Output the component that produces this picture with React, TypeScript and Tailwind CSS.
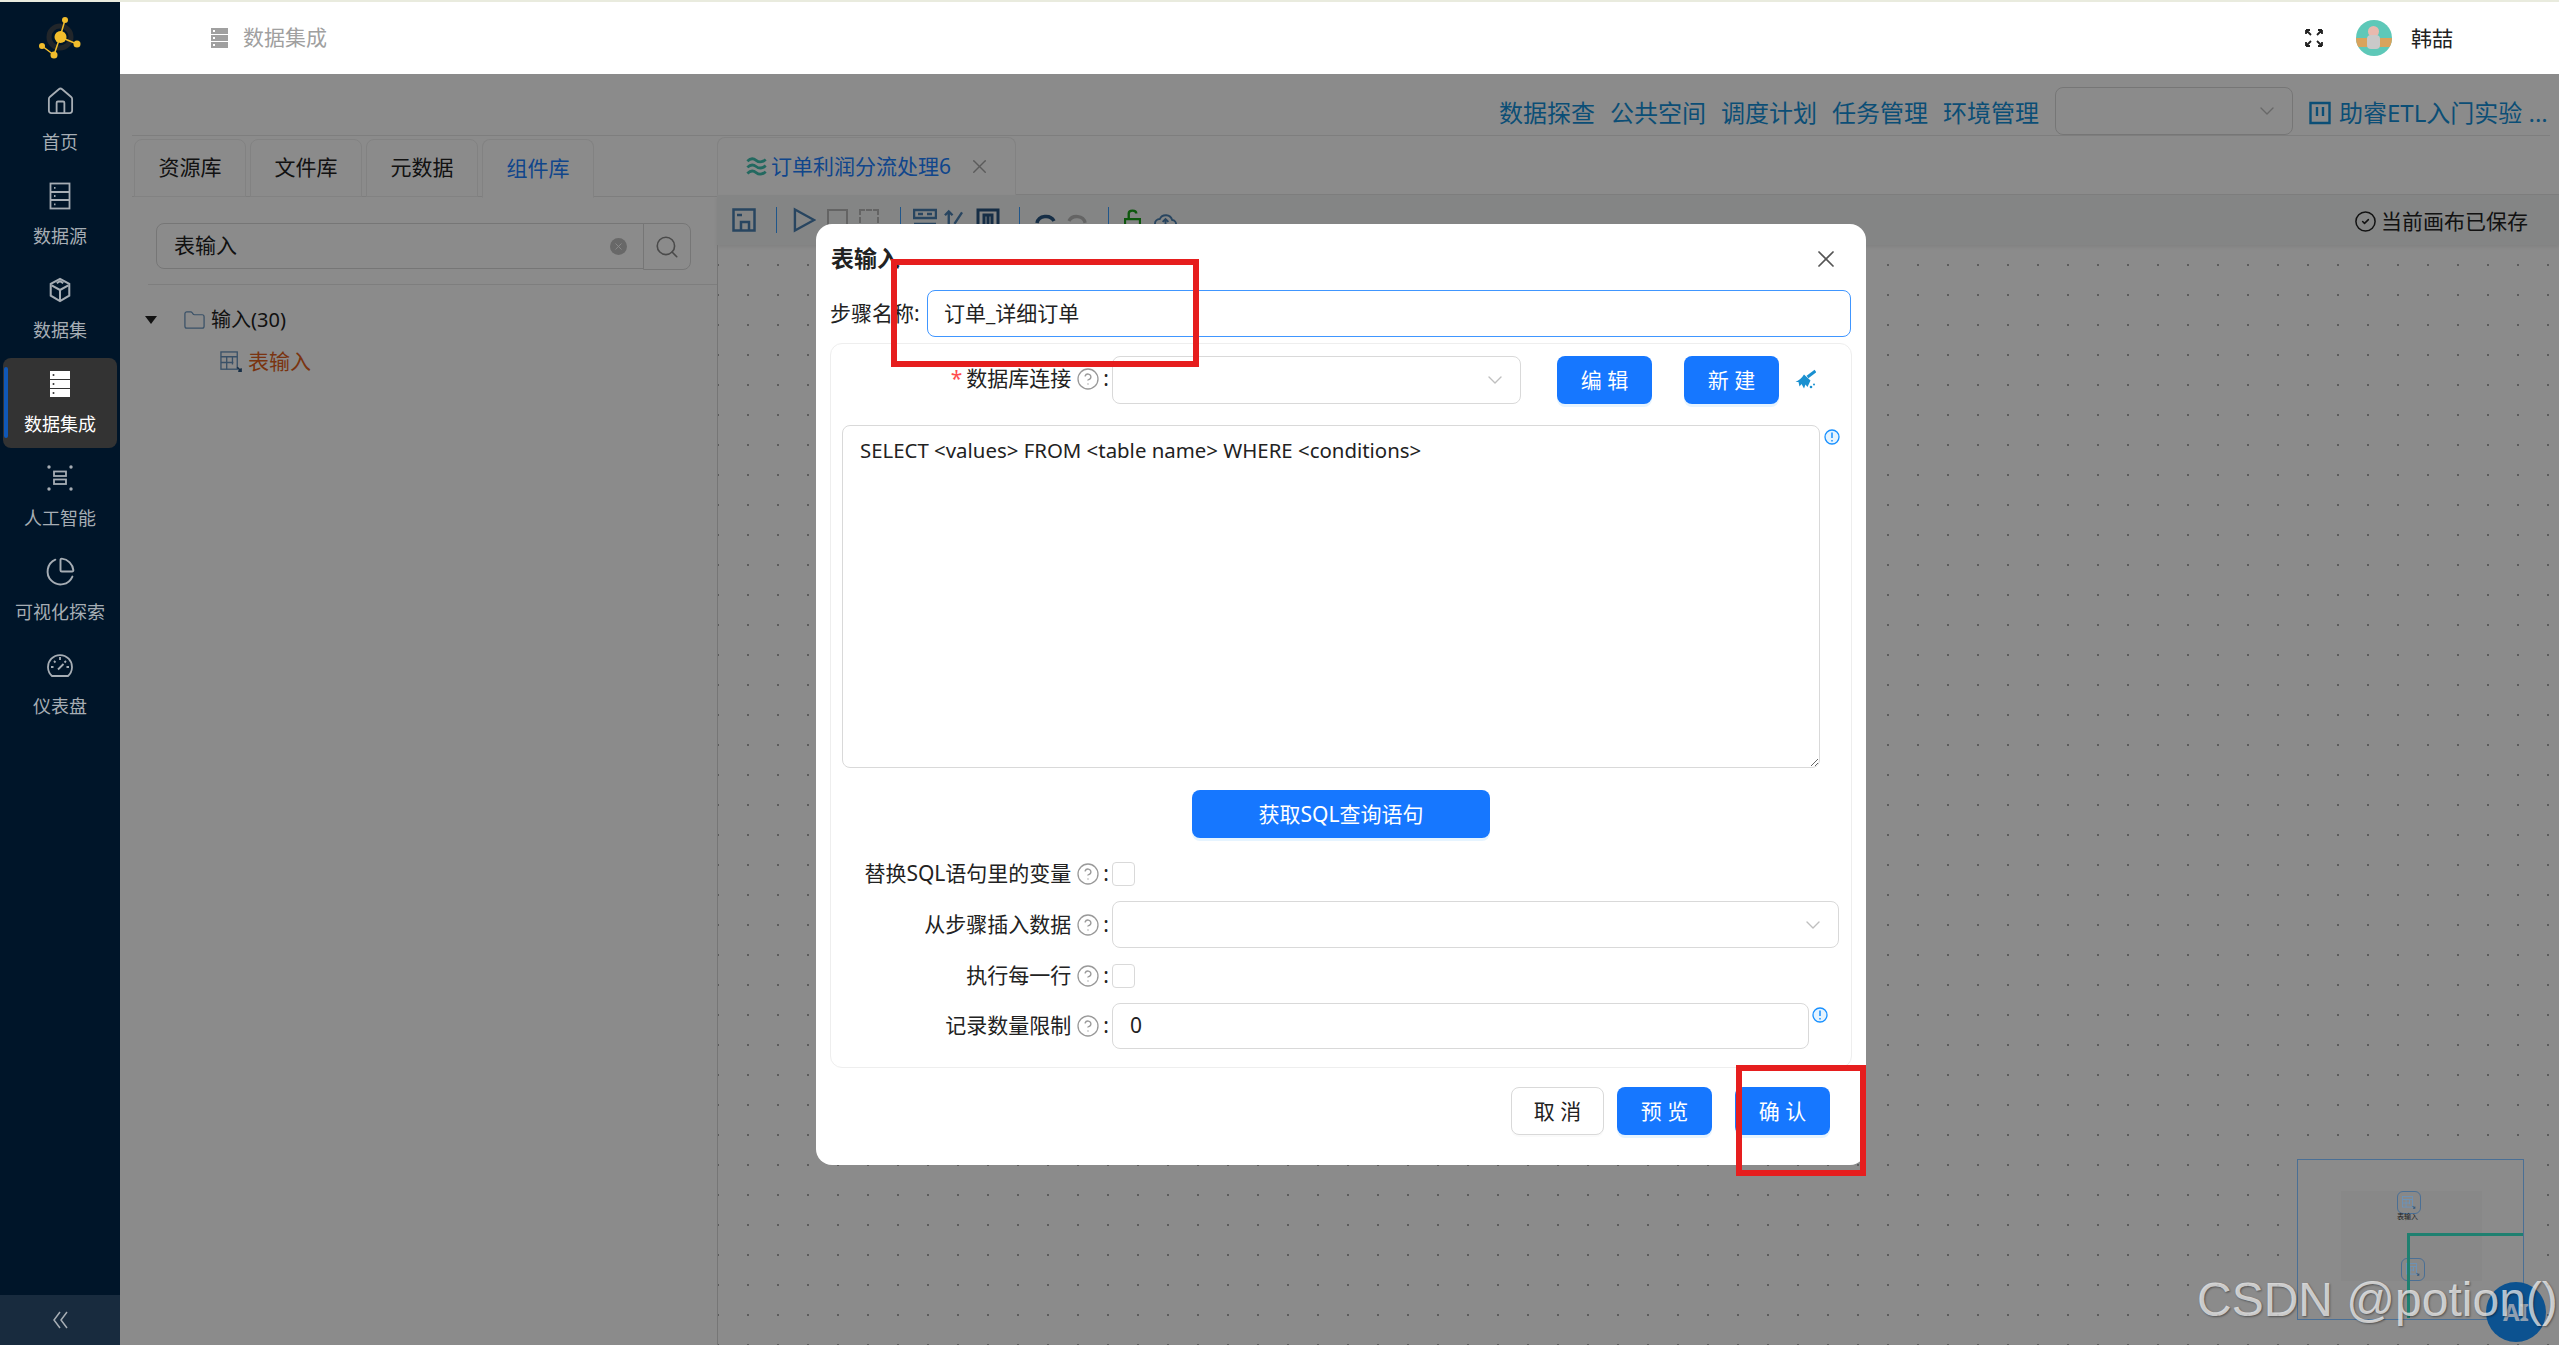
import { ChartPie, ChevronDown, CircleCheck, CircleHelp, Folder, House, Search, X } from "lucide-react";

function StackIcon({ solid = false }: { solid?: boolean }) {
  if (!solid) {
    return (
      <svg viewBox="0 0 24 28" className="h-[28px] w-[24px]" fill="none" stroke="#a6adb4" strokeWidth="1.8">
        <rect x="2.500" y="1.500" width="19" height="25" />
        <path d="M2.500 10h19M2.500 18h19" />
        <path d="M6 5.800h1.500M6 14h1.500M6 22.300h1.500" />
      </svg>
    );
  }
  return (
    <svg viewBox="0 0 24 28" className="h-[28px] w-[24px]">
      {[1, 10, 19].map((y) => (
        <g key={y}>
          <rect x="2" y={y} width="20" height="8" fill="#fff" />
          <circle cx="5.500" cy={y + 4} r="1" fill="#333" />
        </g>
      ))}
    </svg>
  );
}

function CubeIcon() {
  return (
    <svg viewBox="0 0 24 28" className="h-[26px] w-[24px]" fill="none" stroke="#a6adb4" strokeWidth="2.200">
      <path d="M12 2 22 7.500V20L12 26 2 20V7.500Z" />
      <path d="M3 9l9 5 9-5M12 14v11M8.500 6.500 12 4.500l3.500 2" />
    </svg>
  );
}

function AiIcon() {
  return (
    <svg viewBox="0 0 26 26" className="h-[26px] w-[26px]" fill="none" stroke="#a6adb4" strokeWidth="1.800">
      <rect x="7" y="6.500" width="12" height="4.500" />
      <rect x="7" y="14.500" width="12" height="4.500" />
      {[
        [2, 2],
        [24, 2],
        [2, 24],
        [24, 24],
      ].map(([x, y]) => (
        <circle key={`${x}-${y}`} cx={x} cy={y} r="1.700" fill="#a6adb4" stroke="none" />
      ))}
    </svg>
  );
}

function GaugeIcon() {
  return (
    <svg viewBox="0 0 26 26" className="h-[26px] w-[26px]" fill="none" stroke="#a6adb4" strokeWidth="1.800">
      <path d="M5 23A12 12 0 1 1 21 23Z" />
      <path d="M13 4v3M4 14h2.500M19.500 14h2.500M7 8l1.500 1.500M19 8l-1.500 1.500M11 16.500 16.500 11" />
    </svg>
  );
}

function Logo() {
  return (
    <svg viewBox="0 0 60 60" className="h-[60px] w-[60px]" fill="none">
      <circle cx="30" cy="29" r="11" stroke="#22262a" strokeWidth="5" />
      <g stroke="#f2bd2c" strokeWidth="1.500">
        <path d="M30 29 35 12M30 29 47 36M30 29 24 47M24 47 12 38" />
      </g>
      <g fill="#f2bd2c">
        <circle cx="30.500" cy="29" r="6" />
        <circle cx="35" cy="12" r="3" />
        <circle cx="47" cy="36" r="3.500" />
        <circle cx="24" cy="47" r="3.500" />
        <circle cx="12" cy="38" r="3" />
      </g>
    </svg>
  );
}

function TableInputIcon({ className }: { className: string }) {
  return (
    <svg viewBox="0 0 24 24" className={className} fill="none" stroke="#6a94bd" strokeWidth="1.400">
      <rect x="1" y="1" width="17" height="18" />
      <path d="M1 6h17M1 12h13M7 6v13M13 6v8" />
      <path d="M18 17l4 4M22 18v3h-3" stroke="#2a5580" strokeWidth="1.600" />
    </svg>
  );
}

function BroomIcon() {
  return (
    <svg viewBox="0 0 21 21" className="h-[21px] w-[21px] flex-none" fill="#1a90d0">
      <path d="M20.500 2 12.500 8" stroke="#1a90d0" strokeWidth="3" />
      <path d="M9 5.500 15.500 11.500 12.500 18 10.500 15.500 9 19.500 6.500 15 4.500 17.500 3.500 13 .5 13Q6 10.500 9 5.500Z" />
      <circle cx="16" cy="18" r="1.300" />
      <circle cx="19" cy="15.500" r="1" />
    </svg>
  );
}

const NAV_ITEMS = [
  { label: "首页", icon: <House className="h-[31px] w-[31px] text-[#a6adb4]" strokeWidth={1.4} /> },
  { label: "数据源", icon: <StackIcon /> },
  { label: "数据集", icon: <CubeIcon /> },
  { label: "数据集成", icon: <StackIcon solid />, active: true },
  { label: "人工智能", icon: <AiIcon /> },
  { label: "可视化探索", icon: <ChartPie className="h-[31px] w-[31px] text-[#a6adb4]" strokeWidth={1.5} /> },
  { label: "仪表盘", icon: <GaugeIcon /> },
];

function Sidebar() {
  return (
    <aside className="flex w-[120px] flex-none flex-col bg-[#001529]">
      <div className="flex h-[72px] items-center justify-center">
        <Logo />
      </div>
      <nav className="flex flex-1 flex-col gap-1 px-[3px] pt-[2px]">
        {NAV_ITEMS.map((item) => (
          <div
            key={item.label}
            className={
              item.active
                ? "relative flex h-[90px] flex-col items-center justify-center gap-[14px] rounded-lg bg-[#333333] pb-[1px] text-[18px] text-white"
                : "relative flex h-[90px] flex-col items-center justify-center gap-[14px] rounded-lg pb-[1px] text-[18px] text-[#a6adb4]"
            }
          >
            {item.active && (
              <span className="absolute top-[9px] bottom-[10px] left-[1px] w-[4px] rounded bg-[#1058b8]" />
            )}
            <span className="flex h-[28px] items-center">{item.icon}</span>
            <span className="whitespace-nowrap leading-[24px]">{item.label}</span>
          </div>
        ))}
      </nav>
      <div className="flex h-[50px] items-center justify-center bg-[#182b3e]">
        <svg viewBox="0 0 16 18" className="h-[18px] w-[16px]" fill="none" stroke="#a6adb4" strokeWidth="1.500">
          <path d="M8 1 2 9l6 8M15 1 9 9l6 8" />
        </svg>
      </div>
    </aside>
  );
}

function Header() {
  return (
    <header className="flex h-[72px] flex-none items-center bg-white pl-[91px] pr-[106px]">
      <div className="flex w-[17px] flex-col gap-[1px]">
        {[0, 1, 2].map((row) => (
          <span key={row} className="flex h-[6px] items-center bg-[#a0a0a0] pl-[2px]">
            <span className="h-[2px] w-[2px] bg-white" />
          </span>
        ))}
      </div>
      <span className="ml-[15px] text-[21px] text-[#a0a0a0]">数据集成</span>
      <div className="ml-auto flex items-center">
        <svg viewBox="0 0 20 20" className="h-[20px] w-[20px]" fill="none" stroke="#222" strokeWidth="1.800">
          <path d="M2 2l5 5M2 2v4M2 2h4M18 2l-5 5M18 2v4M18 2h-4M2 18l5-5M2 18v-4M2 18h4M18 18l-5-5M18 18v-4M18 18h-4" />
        </svg>
        <div className="relative ml-[32px] h-[36px] w-[36px] overflow-hidden rounded-full bg-[#5ec8b8]">
          <span className="absolute top-[18px] left-0 h-[9px] w-full bg-[#d9a35c]" />
          <span className="absolute top-[6px] left-[12px] h-[11px] w-[11px] rounded-full bg-[#e8b9ae]" />
          <span className="absolute top-[15px] left-[11px] h-[14px] w-[13px] rounded bg-[#c9c9c9]" />
        </div>
        <span className="ml-[19px] pt-[2px] text-[21px] text-[#222]">韩喆</span>
      </div>
    </header>
  );
}

function TopLinks() {
  return (
    <div className="ml-3 mr-[9px] flex h-[62px] flex-none items-center justify-end border-b border-[#e8e8e8] pt-[13px] text-[24px] text-[#1590d8]">
      <div className="flex gap-[15px] pt-[3px]">
        <span>数据探查</span>
        <span>公共空间</span>
        <span>调度计划</span>
        <span>任务管理</span>
        <span>环境管理</span>
      </div>
      <div className="ml-[16px] flex h-[48px] w-[238px] items-center justify-end rounded-lg border border-[#d9d9d9] pr-[13px] text-[#bfbfbf]">
        <ChevronDown className="h-[24px] w-[24px]" strokeWidth={1.4} />
      </div>
      <div className="ml-[16px] flex w-[241px] items-center gap-[8px] whitespace-nowrap pt-[3px]">
        <svg viewBox="0 0 22 24" className="h-[24px] w-[22px] flex-none" fill="none" stroke="#1590d8" strokeWidth="2.400">
          <path d="M1.500 2h19v20h-19zM8 6v9M14 6v9" />
        </svg>
        <span>助睿ETL入门实验 ...</span>
      </div>
    </div>
  );
}

const LEFT_TABS = ["资源库", "文件库", "元数据", "组件库"];

function LeftPanel() {
  return (
    <div className="ml-3 flex w-[585px] flex-none flex-col">
      <div className="flex h-[61px] gap-1 border-b border-[#e8e8e8] pt-[3px] pl-[2px]">
        {LEFT_TABS.map((tab) => (
          <div
            key={tab}
            className={
              tab === "组件库"
                ? "-mb-px flex h-[59px] w-[112px] items-center justify-center rounded-t-lg border border-[#eeeeee] border-b-white bg-white text-[21px] text-[#2080ff]"
                : "flex h-[58px] w-[112px] items-center justify-center rounded-t-lg border border-[#eeeeee] bg-white text-[21px] text-[#222]"
            }
          >
            {tab}
          </div>
        ))}
      </div>
      <div className="ml-[16px] flex h-[88px] border-b border-[#e8e8e8] pt-[26px] pl-[8px]">
        <div className="flex h-[46px] w-[488px] items-center justify-between rounded-l-lg border border-[#d9d9d9] pl-[17px] pr-[16px] text-[21px] text-[#222]">
          <span>表输入</span>
          <span className="flex h-[17px] w-[17px] items-center justify-center rounded-full bg-[#bfbfbf]">
            <X className="h-[11px] w-[11px] text-white" strokeWidth={2} />
          </span>
        </div>
        <div className="-ml-px flex h-[47px] w-[48px] items-center justify-center rounded-r-lg border border-[#d9d9d9]">
          <Search className="h-[26px] w-[26px] text-[#888]" strokeWidth={1.5} />
        </div>
      </div>
      <div className="mt-[20px] flex h-[30px] items-center text-[20px] text-[#222]">
        <span className="ml-[13px] h-0 w-0 border-x-[6px] border-t-[8px] border-x-transparent border-t-[#222]" />
        <Folder className="ml-[26px] h-[23px] w-[23px] text-[#6a94bd]" strokeWidth={1.3} />
        <span className="ml-[5px]">输入(30)</span>
      </div>
      <div className="mt-[15px] flex h-[24px] items-center pl-[88px] text-[21px] text-[#e06020]">
        <TableInputIcon className="h-[23px] w-[23px]" />
        <span className="ml-[5px]">表输入</span>
      </div>
    </div>
  );
}

function Toolbar() {
  const Sep = ({ ml }: { ml: string }) => <span className={`h-[26px] w-px bg-[#3a9fff] ${ml}`} />;
  return (
    <div className="flex h-[50px] flex-none items-center bg-[#f2f5f5] pl-[15px] pr-[31px] shadow-[0_2px_4px_rgba(0,0,0,0.08)]">
      <svg viewBox="0 0 24 24" className="h-[24px] w-[24px]" fill="none" stroke="#4a7fb0" strokeWidth="2.500">
        <rect x="1.500" y="1.500" width="21" height="21" />
        <path d="M5 7h5M9 23v-9h8v9" />
      </svg>
      <Sep ml="ml-[20px]" />
      <svg viewBox="0 0 24 26" className="ml-[16px] h-[26px] w-[23px]" fill="none" stroke="#4a7fb0" strokeWidth="2.500">
        <path d="M2 2 22 13 2 24Z" />
      </svg>
      <span className="ml-[11px] h-[22px] w-[21px] border-2 border-[#b8b8b8]" />
      <span className="ml-[11px] h-[22px] w-[20px] border-2 border-dashed border-[#b8b8b8]" />
      <Sep ml="ml-[21px]" />
      <svg viewBox="0 0 24 24" className="ml-[12px] h-[24px] w-[24px]" fill="none" stroke="#4a7fb0" strokeWidth="2.500">
        <path d="M1 2h22v8H1zM5 6h5M14 6h5M1 16h22" />
      </svg>
      <svg viewBox="0 0 20 24" className="ml-[7px] h-[24px] w-[19px]" fill="none" stroke="#4a7fb0" strokeWidth="2.500">
        <path d="M5 24V3M1 7l4-4 4 4M11 16 19 4" />
      </svg>
      <svg viewBox="0 0 24 24" className="ml-[13px] h-[24px] w-[24px]" fill="none" stroke="#2a5580" strokeWidth="3">
        <path d="M2 2h20v20H2zM8 18V7h8v11M12 7v11" />
      </svg>
      <Sep ml="ml-[19px]" />
      <svg viewBox="0 0 22 22" className="ml-[14px] h-[22px] w-[22px]" fill="none" stroke="#2a5580" strokeWidth="3.500">
        <path d="M3 14A9 8 0 0 1 20 12" />
      </svg>
      <svg viewBox="0 0 22 22" className="ml-[11px] h-[22px] w-[21px]" fill="none" stroke="#b8b8b8" strokeWidth="3.500">
        <path d="M2 12A9 8 0 0 1 19 14" />
      </svg>
      <Sep ml="ml-[20px]" />
      <svg viewBox="0 0 18 22" className="ml-[15px] h-[22px] w-[17px]" fill="none" stroke="#18a018" strokeWidth="2.500">
        <path d="M5 9V4q0-3 4-3t4 3M1 10h16v11H1z" />
      </svg>
      <svg viewBox="0 0 24 22" className="ml-[13px] h-[22px] w-[23px]" fill="none" stroke="#4a7fb0" strokeWidth="2">
        <path d="M6 20a5 5 0 0 1 0-10 7 7 0 0 1 13 1 4.500 4.500 0 0 1-1 9zM12 17v-6M9 13l3-3 3 3" />
      </svg>
      <div className="ml-auto flex items-center gap-[4px] pt-[3px] text-[21px] text-[#222]">
        <CircleCheck className="h-[23px] w-[23px]" strokeWidth={1.6} />
        当前画布已保存
      </div>
    </div>
  );
}

function RightPanel() {
  return (
    <div className="flex flex-1 flex-col">
      <div className="flex h-[59px] flex-none border-b border-[#e8e8e8] pt-px">
        <div className="-mb-px flex w-[299px] items-center rounded-t-lg border border-[#eeeeee] border-b-white bg-white pl-[26px]">
          <svg viewBox="0 0 26 24" className="h-[21px] w-[26px] flex-none" fill="none" stroke="#40c0b0" strokeWidth="3.200">
            <path d="M2 6q5-5 10-1t11-1M2 13q5-5 10-1t11-1M2 20q5-5 10-1t11-1" />
          </svg>
          <span className="ml-[1px] whitespace-nowrap pt-[2px] text-[21px] text-[#2080ff]">订单利润分流处理6</span>
          <X className="ml-[17px] h-[23px] w-[23px] text-[#a8a8a8]" strokeWidth={1.5} />
        </div>
      </div>
      <Toolbar />
      <div className="flex-1 border-l border-[#d9d9d9] bg-[radial-gradient(circle,#aaaaaa_1px,transparent_1.2px)] bg-[length:30px_30px] bg-[position:-15px_5px]" />
    </div>
  );
}

function HelpLabel({ text, required }: { text: string; required?: boolean }) {
  return (
    <div
      className={
        required
          ? "flex w-[281px] flex-none items-center justify-end pr-[3px] pb-[3px] text-[21px] text-[#222]"
          : "flex w-[281px] flex-none items-center justify-end pr-[3px] text-[21px] text-[#222]"
      }
    >
      {required && <span className="mr-[4px] text-[#ff4d4f]">*</span>}
      <span className="whitespace-nowrap">{text}</span>
      <CircleHelp className="ml-[5px] mr-[3px] h-[24px] w-[24px] text-[#999]" strokeWidth={1.3} />
      <span>:</span>
    </div>
  );
}

function SelectBox({ className }: { className: string }) {
  return (
    <div className={`flex items-center justify-end rounded-lg border border-[#d9d9d9] pr-[13px] ${className}`}>
      <ChevronDown className="h-[24px] w-[24px] text-[#bfbfbf]" strokeWidth={1.4} />
    </div>
  );
}

function Checkbox() {
  return <span className="h-[24px] w-[23px] rounded border border-[#d9d9d9] bg-white" />;
}

function InfoIcon() {
  return (
    <svg viewBox="0 0 18 18" className="h-[18px] w-[18px]" fill="#e6f4ff" stroke="#1890ff" strokeWidth="1.300">
      <circle cx="9" cy="9" r="7" />
      <path d="M9 4.500v5.500M9 12v1.500" strokeWidth="1.500" />
    </svg>
  );
}

function PrimaryButton({ label, className }: { label: string; className: string }) {
  return (
    <button
      className={`flex h-[48px] items-center justify-center rounded-lg bg-[#1677ff] pt-[2px] text-[21px] text-white shadow-[0_3px_0_#e6f4ff] ${className}`}
    >
      {label}
    </button>
  );
}

function InputDialog() {
  return (
    <div className="absolute top-[224px] left-[816px] flex h-[941px] w-[1050px] flex-col rounded-2xl bg-white px-[14px]">
      <div className="flex h-[66px] flex-none items-center justify-between pt-[2px] pr-[12px] pl-px">
        <span className="text-[23px] font-bold text-[#222]">表输入</span>
        <X className="mt-[2px] h-[28px] w-[28px] text-[#555]" strokeWidth={1.5} />
      </div>
      <div className="flex h-[47px] flex-none items-center">
        <span className="w-[97px] whitespace-nowrap text-[21px] text-[#222]">步骤名称:</span>
        <div className="flex h-[47px] w-[924px] items-center rounded-lg border border-[#4096ff] pl-[16px] text-[21px] text-[#222]">
          订单_详细订单
        </div>
      </div>
      <div className="mt-[6px] flex h-[725px] w-[1022px] flex-none flex-col rounded-xl border border-[#eeeeee] pt-[12px]">
        <div className="flex h-[48px] flex-none items-stretch">
          <HelpLabel text="数据库连接" required />
          <SelectBox className="w-[409px]" />
          <PrimaryButton label="编 辑" className="ml-[36px] w-[95px]" />
          <PrimaryButton label="新 建" className="ml-[32px] w-[95px]" />
          <span className="ml-[16px] mt-[13px]">
            <BroomIcon />
          </span>
        </div>
        <div className="mt-[21px] flex h-[343px] flex-none pl-[11px]">
          <textarea
            className="h-full w-[978px] rounded-lg border border-[#d9d9d9] px-[17px] pt-[9px] text-[20.4px] text-[#222] outline-none"
            defaultValue="SELECT <values> FROM <table name> WHERE <conditions>"
          />
          <span className="ml-[3px] mt-[3px]">
            <InfoIcon />
          </span>
        </div>
        <PrimaryButton label="获取SQL查询语句" className="mt-[22px] ml-[361px] w-[298px] flex-none" />
        <div className="mt-[24px] flex h-[24px] flex-none">
          <HelpLabel text="替换SQL语句里的变量" />
          <Checkbox />
        </div>
        <div className="mt-[15px] flex h-[47px] flex-none">
          <HelpLabel text="从步骤插入数据" />
          <SelectBox className="w-[727px]" />
        </div>
        <div className="mt-[16px] flex h-[24px] flex-none">
          <HelpLabel text="执行每一行" />
          <Checkbox />
        </div>
        <div className="mt-[15px] flex h-[46px] flex-none">
          <HelpLabel text="记录数量限制" />
          <div className="flex w-[697px] items-center rounded-lg border border-[#d9d9d9] pl-[17px] text-[21px] text-[#222]">
            0
          </div>
          <span className="ml-[2px] mt-[3px]">
            <InfoIcon />
          </span>
        </div>
      </div>
      <div className="mt-[19px] flex justify-end gap-[13px] pr-[22px]">
        <button className="flex h-[48px] w-[93px] items-center justify-center rounded-lg border border-[#d9d9d9] bg-white pt-[2px] text-[21px] text-[#222] shadow-[0_2px_0_rgba(0,0,0,0.02)]">
          取 消
        </button>
        <PrimaryButton label="预 览" className="w-[95px]" />
        <PrimaryButton label="确 认" className="ml-[10px] w-[95px]" />
      </div>
    </div>
  );
}

function Minimap() {
  return (
    <div className="absolute top-[1159px] left-[2297px] h-[161px] w-[227px] border border-[#4a6f95] bg-[#8b8b8b]">
      <div className="absolute top-[31px] left-[43px] h-[90px] w-[141px] bg-[#888888]" />
      <div className="absolute top-[31px] left-[99px] flex h-[23px] w-[24px] items-center justify-center rounded-md border border-[#4a6f95]">
        <TableInputIcon className="h-[14px] w-[14px]" />
      </div>
      <span className="absolute top-[52px] left-[99px] text-[7px] text-[#222]">表输入</span>
      <div className="absolute top-[98px] left-[103px] flex h-[23px] w-[24px] items-center justify-center rounded-md border border-[#4a6f95]">
        <TableInputIcon className="h-[14px] w-[14px]" />
      </div>
      <div className="absolute top-[73px] left-[109px] h-[85px] w-[116px] border-t-[3px] border-l-[3px] border-[#1f8070]" />
    </div>
  );
}

export default function App() {
  return (
    <div className="relative flex h-screen w-screen flex-col overflow-hidden bg-white font-['Noto_Sans','Noto_Sans_CJK_SC',sans-serif]">
      <div className="h-[2px] flex-none bg-[#e9ebde]" />
      <div className="flex min-h-0 flex-1">
        <Sidebar />
        <div className="flex min-w-0 flex-1 flex-col">
          <Header />
          <main className="relative flex min-h-0 flex-1 flex-col">
            <TopLinks />
            <div className="flex min-h-0 flex-1">
              <LeftPanel />
              <RightPanel />
            </div>
            {/* modal mask */}
            <div className="absolute inset-0 bg-black/[0.455]" />
          </main>
        </div>
      </div>
      <InputDialog />
      <Minimap />

      {/* red annotation boxes */}
      <div className="absolute top-[259px] left-[891px] h-[108px] w-[308px] border-[6px] border-[#e61e1e]" />
      <div className="absolute top-[1065px] left-[1736px] h-[111px] w-[130px] border-[6px] border-[#e61e1e]" />

      <div className="absolute top-[1282px] left-[2486px] flex h-[60px] w-[60px] items-center justify-center rounded-full bg-[#0c5290] text-[24px] font-bold text-[#8f9fb0]">
        AI
      </div>
      <div className="absolute top-[1270px] left-[2197px] whitespace-nowrap font-['Liberation_Sans',sans-serif] text-[48px] leading-[60px] text-white/70 [text-shadow:1px_1px_2px_rgba(0,0,0,0.4)]">
        CSDN @potion()
      </div>
    </div>
  );
}
